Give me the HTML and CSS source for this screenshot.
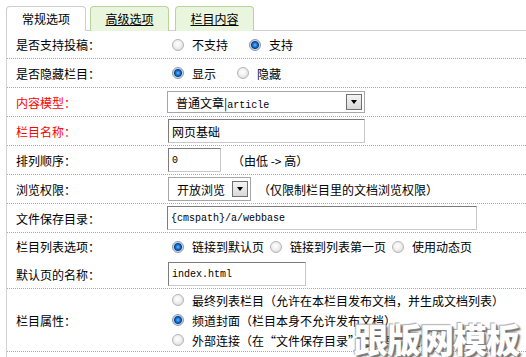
FILE: index.html
```html
<!DOCTYPE html>
<html lang="zh-CN">
<head>
  <meta charset="UTF-8" />
  <title>栏目设置</title>
  <link rel="stylesheet" href="styles.css">
</head>
<body>
  <div class="tabs">
    <span class="tab active">常规选项</span>
    <a class="tab" href="#">高级选项</a>
    <a class="tab" href="#">栏目内容</a>
  </div>

  <div class="panel">
    <div class="row">
      <div class="label">是否支持投稿：</div>
      <div class="field">
        <label class="opt"><input type="radio" name="tougao"> 不支持</label>
        <label class="opt wide"><input type="radio" name="tougao" checked> 支持</label>
      </div>
    </div>
    <div class="row">
      <div class="label">是否隐藏栏目：</div>
      <div class="field">
        <label class="opt"><input type="radio" name="hide" checked> 显示</label>
        <label class="opt wide"><input type="radio" name="hide"> 隐藏</label>
      </div>
    </div>
    <div class="row">
      <div class="label red">内容模型：</div>
      <div class="field">
        <div class="select model"><span>普通文章|<span class="mono">article</span></span><i class="btn"></i></div>
      </div>
    </div>
    <div class="row">
      <div class="label red">栏目名称：</div>
      <div class="field"><input class="text name" type="text" value="网页基础"></div>
    </div>
    <div class="row">
      <div class="label">排列顺序：</div>
      <div class="field">
        <input class="text mono order" type="text" value="0">
        <span class="note">（由低 -&gt; 高）</span>
      </div>
    </div>
    <div class="row">
      <div class="label">浏览权限：</div>
      <div class="field">
        <div class="select rank"><span>开放浏览</span><i class="btn"></i></div>
        <span class="note">（仅限制栏目里的文档浏览权限）</span>
      </div>
    </div>
    <div class="row">
      <div class="label">文件保存目录：</div>
      <div class="field"><input class="text mono path" type="text" value="{cmspath}/a/webbase"></div>
    </div>
    <div class="row plain">
      <div class="label">栏目列表选项：</div>
      <div class="field">
        <label class="opt"><input type="radio" name="list" checked> 链接到默认页</label>
        <label class="opt"><input type="radio" name="list"> 链接到列表第一页</label>
        <label class="opt"><input type="radio" name="list"> 使用动态页</label>
      </div>
    </div>
    <div class="row">
      <div class="label">默认页的名称：</div>
      <div class="field"><input class="text mono index" type="text" value="index.html"></div>
    </div>
    <div class="row tall">
      <div class="label">栏目属性：</div>
      <div class="field stack">
        <label class="opt"><input type="radio" name="ispart"> 最终列表栏目（允许在本栏目发布文档，并生成文档列表）</label>
        <label class="opt"><input type="radio" name="ispart" checked> 频道封面（栏目本身不允许发布文档）</label>
        <label class="opt"><input type="radio" name="ispart"> 外部连接（在“文件保存目录”处填写网址）</label>
      </div>
    </div>
  </div>

  <div class="watermark">跟版网模板</div>
</body>
</html>
```

FILE: styles.css
```css
html {
  height: 357px;
  overflow: hidden;
}
body {
  box-sizing: border-box;
  margin: 0;
  padding: 6px 0 0 6px;
  height: 357px;
  font-family: "Noto Sans CJK SC", "DejaVu Sans", sans-serif;
  font-size: 12px;
  color: #000;
  background: #fff;
  position: relative;
  overflow: hidden;
}
.tabs {
  display: flex;
  height: 24px;
}
.tab {
  box-sizing: border-box;
  width: 79px;
  height: 25px;
  margin-right: 6px;
  border: 1px solid #b8d49c;
  border-bottom: none;
  border-radius: 4px 4px 0 0;
  background: #eaf5dd;
  color: #000;
  text-align: center;
  line-height: 23px;
  text-decoration: underline;
  position: relative;
}
.tab.active {
  width: 80px;
  margin-right: 4px;
  border-color: #cfcfcf;
  background: #fff;
  text-decoration: none;
  z-index: 1;
}
.panel {
  box-sizing: border-box;
  border-top: 1px solid #cfcfcf;
  border-left: 1px solid #d4d4d4;
  height: 327px;
}
.row {
  display: flex;
  align-items: center;
  height: 28px;
  border-bottom: 1px dotted #aaa;
}
.row:first-child {
  height: 27px;
}
.row.plain {
  border-bottom: none;
  height: 27px;
}
.row.tall {
  height: 62px;
}
.label {
  width: 151px;
  padding-left: 9px;
  flex-shrink: 0;
}
.label.red {
  color: #f00;
}
.field {
  display: flex;
  align-items: center;
}
.field.stack {
  flex-direction: column;
  align-items: flex-start;
  gap: 3px;
}
.opt {
  display: flex;
  align-items: center;
  margin-left: 5px;
  margin-right: 1px;
  white-space: nowrap;
}
.opt.wide {
  margin-left: 20px;
}
input[type="radio"] {
  appearance: none;
  width: 12px;
  height: 12px;
  margin: 0 8px 0 0;
  border-radius: 50%;
  border: 1px solid #b4b4b4;
  background: radial-gradient(circle at 45% 40%, #fff 0, #f2f2f2 40%, #d2d2d2 100%);
}
input[type="radio"]:checked {
  border-color: #8a9aac;
  background: radial-gradient(circle, #5cc0ff 0, #1a78d8 2px, #0b3f8c 3.5px, #c9d6e2 4.5px, #eef1f4 100%);
}
.mono {
  font-family: "Liberation Mono", "DejaVu Sans Mono", monospace;
  font-size: 10px;
}
.text {
  box-sizing: border-box;
  height: 24px;
  margin: 0 0 0 1px;
  padding: 0 3px;
  border: 1px solid #c8c8c8;
  border-top-color: #7c7c7c;
  border-left-color: #7c7c7c;
  font-family: "Noto Sans CJK SC", sans-serif;
  font-size: 12px;
  color: #000;
  outline: none;
}
.text.mono {
  font-family: "Liberation Mono", "DejaVu Sans Mono", monospace;
  font-size: 10px;
}
.name {
  width: 197px;
}
.order {
  width: 53px;
}
.path {
  width: 310px;
  margin-left: 0;
}
.index {
  width: 138px;
}
.note {
  margin-left: 11px;
}
.select {
  box-sizing: border-box;
  display: flex;
  align-items: center;
  justify-content: space-between;
  height: 22px;
  padding: 0 2px 0 8px;
  border: 1px solid #a6a6a6;
  background: #fff;
}
.select.model {
  width: 198px;
}
.select.rank {
  width: 83px;
  height: 24px;
  margin-left: 1px;
}
.select.rank + .note {
  margin-left: 7px;
}
.btn {
  box-sizing: border-box;
  width: 16px;
  height: 16px;
  border: 1px solid #6f6f6f;
  background: linear-gradient(#f4f4f4, #d9d9d9);
  position: relative;
}
.btn::after {
  content: "";
  position: absolute;
  left: 4px;
  top: 5px;
  border-left: 3px solid transparent;
  border-right: 3px solid transparent;
  border-top: 4px solid #000;
}
.watermark {
  position: absolute;
  left: 354px;
  top: 314px;
  font-size: 34px;
  font-weight: 900;
  letter-spacing: -1px;
  color: #fff;
  text-shadow: 1px 1px 0 #888, 2px 2px 2px #555, -1px -1px 1px #aaa;
  white-space: nowrap;
}
```
